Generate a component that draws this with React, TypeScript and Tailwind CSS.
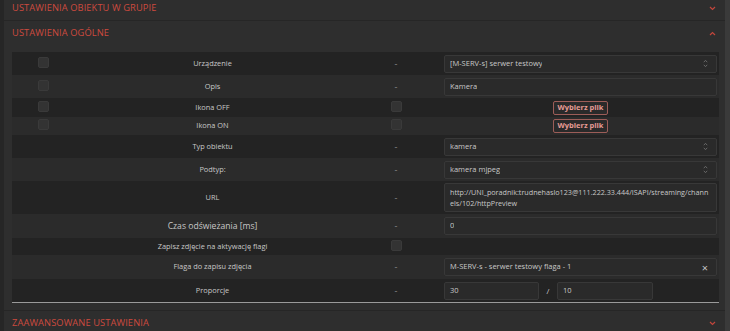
import React from "react";

const RED = "text-[#cd4a3f]";

function Chevron({ up }: { up?: boolean }) {
  return (
    <svg width="7" height="5" viewBox="0 0 7 5" className="shrink-0">
      <polyline
        points={up ? "1,4 3.5,1.5 6,4" : "1,1 3.5,3.5 6,1"}
        fill="none"
        stroke="#c2463c"
        strokeWidth="1.2"
      />
    </svg>
  );
}

function SelArrows() {
  return (
    <svg width="5" height="9" viewBox="0 0 5 9" className="shrink-0">
      <polyline points="0.8,3.2 2.5,1.3 4.2,3.2" fill="none" stroke="#6e6e6e" strokeWidth="0.9" />
      <polyline points="0.8,5.8 2.5,7.7 4.2,5.8" fill="none" stroke="#6e6e6e" strokeWidth="0.9" />
    </svg>
  );
}

function Box() {
  return <div className="w-[11px] h-[11px] rounded-[2px] bg-[#333333] border border-[#3a3a3a]" />;
}

function Header({ title, up, h, border }: { title: string; up?: boolean; h: string; border?: boolean }) {
  return (
    <div
      className={`shrink-0 flex items-center justify-between pl-[8px] pr-[9px] ${h} ${border ? "border-b border-[#262626]" : ""}`}
    >
      <span className={`${RED} text-[9.3px] tracking-[0.1px] leading-none`}>{title}</span>
      <Chevron up={up} />
    </div>
  );
}

function Row({
  h,
  dark,
  cb,
  label,
  mid,
  children,
  bigLabel,
}: {
  h: string;
  dark: boolean;
  cb?: boolean;
  label: string;
  mid: "dash" | "box" | "none";
  children?: React.ReactNode;
  bigLabel?: boolean;
}) {
  return (
    <div className={`shrink-0 grid grid-cols-[63px_275px_92px_1fr] ${h} ${dark ? "bg-[#232323]" : "bg-[#2b2b2b]"}`}>
      <div className="flex items-center justify-center pb-[3px]">{cb && <Box />}</div>
      <div className={`flex items-center justify-center text-[#c8c8c8] ${bigLabel ? "text-[8.6px]" : "text-[7.4px]"}`}>
        {label}
      </div>
      <div className="flex items-center justify-center text-[#8a8a8a] text-[9px]">
        {mid === "dash" && "-"}
        {mid === "box" && (
          <div className="pb-[3px]">
            <Box />
          </div>
        )}
      </div>
      <div className="flex items-center px-[2px]">{children}</div>
    </div>
  );
}

function Field({ children, right }: { children: React.ReactNode; right?: React.ReactNode }) {
  return (
    <div className="w-full h-[18px] flex items-center justify-between rounded-[2px] bg-[#2a2a2a] border border-[#383838] pl-[5px] pr-[8px] text-[7.5px] text-[#c8c8c8]">
      <span className="truncate">{children}</span>
      {right}
    </div>
  );
}

function FileBtn() {
  return (
    <div className="w-full flex justify-center">
      <div className="h-[14px] px-[4px] flex items-center rounded-[2px] border border-[#9c5d58] bg-[#2a2a2a] text-[#e59b94] text-[7.5px] font-bold">
        Wybierz plik
      </div>
    </div>
  );
}

export default function App() {
  return (
    <div
      className="flex w-[730px] h-[331px] bg-[#2e2e2e] overflow-hidden"
      style={{ fontFamily: '"Open Sans", "Noto Sans", sans-serif' }}
    >
      <div className="w-[4px] bg-[#262626] shrink-0" />
      <div className="flex-1 flex flex-col">
        <Header title="USTAWIENIA OBIEKTU W GRUPIE" h="h-[21px] pb-[4px]" border />
        <Header title="USTAWIENIA OGÓLNE" up h="h-[24px]" />
        <div className="shrink-0 mt-[7px] ml-[8px] mr-[6px] flex flex-col border-b border-[#9a9a9a]">
          <Row h="h-[23px]" dark cb label="Urządzenie" mid="dash">
            <Field right={<SelArrows />}>[M-SERV-s] serwer testowy</Field>
          </Row>
          <Row h="h-[23px]" dark={false} cb label="Opis" mid="dash">
            <Field>Kamera</Field>
          </Row>
          <Row h="h-[19px]" dark cb label="Ikona OFF" mid="box">
            <FileBtn />
          </Row>
          <Row h="h-[18px]" dark={false} cb label="Ikona ON" mid="box">
            <FileBtn />
          </Row>
          <Row h="h-[23px]" dark label="Typ obiektu" mid="dash">
            <Field right={<SelArrows />}>kamera</Field>
          </Row>
          <Row h="h-[23px]" dark={false} label="Podtyp:" mid="dash">
            <Field right={<SelArrows />}>kamera mjpeg</Field>
          </Row>
          <Row h="h-[33px]" dark label="URL" mid="dash">
            <div className="w-full h-[29px] rounded-[2px] bg-[#2a2a2a] border border-[#383838] pl-[5px] pr-[5px] pt-[3px] text-[7.2px] leading-[10.5px] text-[#c8c8c8] break-all">
              http://UNI_poradnik:trudnehaslo123@111.222.33.444/ISAPI/streaming/channels/102/httpPreview
            </div>
          </Row>
          <Row h="h-[24px]" dark={false} label="Czas odświeżania [ms]" mid="dash" bigLabel>
            <Field>0</Field>
          </Row>
          <Row h="h-[17px]" dark label="Zapisz zdjęcie na aktywację flagi" mid="box" />
          <Row h="h-[24px]" dark={false} label="Flaga do zapisu zdjęcia" mid="dash">
            <Field right={<span className="text-[#c4c4c4] text-[11px] leading-none">×</span>}>
              M-SERV-s - serwer testowy flaga - 1
            </Field>
          </Row>
          <Row h="h-[23px]" dark label="Proporcje" mid="dash">
            <div className="flex items-center">
              <div className="w-[95px] h-[18px] flex items-center rounded-[2px] bg-[#2a2a2a] border border-[#383838] pl-[5px] text-[7.5px] text-[#c8c8c8]">
                30
              </div>
              <span className="w-[18px] text-center text-[#c8c8c8] text-[8px]">/</span>
              <div className="w-[96px] h-[18px] flex items-center rounded-[2px] bg-[#2a2a2a] border border-[#383838] pl-[5px] text-[7.5px] text-[#c8c8c8]">
                10
              </div>
            </div>
          </Row>
        </div>
        <div className="shrink-0 mt-[7px] border-t border-[#262626]">
          <Header title="ZAAWANSOWANE USTAWIENIA" h="h-[24px]" />
        </div>
      </div>
      <div className="w-[5px] bg-[#3a3a3a] shrink-0" />
    </div>
  );
}
